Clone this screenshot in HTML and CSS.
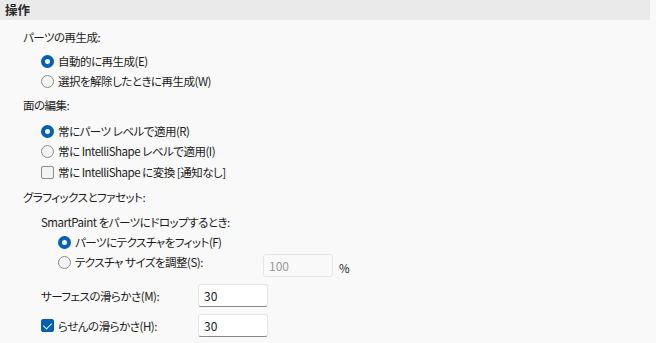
FILE: index.html
```html
<!DOCTYPE html>
<html lang="ja">

<head>
    <meta charset="UTF-8">
    <meta name="viewport" content="width=device-width, initial-scale=1.0">
    <title>操作</title>
    <link rel="stylesheet" href="styles.css">
</head>

<body>
    <div class="panel">
        <div class="panel-header">操作</div>

        <div class="panel-body">
            <div class="group-label g1">パーツの再生成:</div>
            <div class="options">
                <label class="option"><span class="radio checked"></span>自動的に再生成(E)</label>
                <label class="option"><span class="radio"></span>選択を解除したときに再生成(W)</label>
            </div>

            <div class="group-label g2">面の編集:</div>
            <div class="options o2">
                <label class="option"><span class="radio checked"></span>常にパーツ レベルで適用(R)</label>
                <label class="option"><span class="radio"></span>常に IntelliShape レベルで適用(I)</label>
                <label class="option cb-row"><span class="checkbox"></span>常に IntelliShape に変換 [通知なし]</label>
            </div>

            <div class="group-label g3">グラフィックスとファセット:</div>
            <div class="sub">
                <div class="sub-label">SmartPaint をパーツにドロップするとき:</div>
                <div class="sub-options">
                    <label class="option"><span class="radio checked"></span>パーツにテクスチャをフィット(F)</label>
                    <div class="option size-row">
                        <label class="size-label"><span class="radio"></span>テクスチャ サイズを調整(S):</label>
                        <input class="field disabled" type="text" value="100" disabled>
                        <span class="unit">%</span>
                    </div>
                </div>

                <div class="field-row r1">
                    <label class="field-label">サーフェスの滑らかさ(M):</label>
                    <input class="field" type="text" value="30">
                </div>
                <div class="field-row r2">
                    <label class="field-label"><span class="checkbox checked"></span>らせんの滑らかさ(H):</label>
                    <input class="field" type="text" value="30">
                </div>
            </div>
        </div>
    </div>
</body>

</html>
```

FILE: styles.css
```css
* {
    margin: 0;
    padding: 0;
    box-sizing: border-box;
}

body {
    background-color: #f9f9f9;
    color: #1b1b1b;
    font-family: 'Noto Sans CJK JP', 'Noto Sans', sans-serif;
    font-size: 11.5px;
    letter-spacing: -0.5px;
    font-feature-settings: "palt";
    width: 656px;
    height: 343px;
    overflow: hidden;
}

.panel-header {
    width: 650px;
    height: 20px;
    line-height: 20px;
    padding-left: 5px;
    background-color: #eaeaea;
    font-weight: bold;
    font-size: 12.5px;
    letter-spacing: 0;
    color: #2b2b2b;
}

.panel-body {
    padding-left: 23px;
}

.group-label,
.sub-label,
.option {
    height: 20px;
    line-height: 20px;
    white-space: nowrap;
}

.g1 {
    margin-top: 7px;
}

.g2 {
    margin-top: 4px;
}

.g3 {
    margin-top: 5px;
}

.options {
    margin-top: 4px;
    padding-left: 18px;
    display: flex;
    flex-direction: column;
}

.o2 {
    margin-top: 6px;
}

.cb-row {
    margin-top: 1px;
}

.option,
.size-label,
.field-label {
    display: flex;
    align-items: center;
}

.radio {
    width: 13px;
    height: 13px;
    border-radius: 50%;
    border: 1px solid #8b8b8b;
    background-color: #f3f3f3;
    margin-right: 4px;
    flex-shrink: 0;
}

.radio.checked {
    border: 4px solid #005fb8;
    background-color: #ffffff;
}

.checkbox {
    width: 13px;
    height: 13px;
    border-radius: 2px;
    border: 1px solid #8b8b8b;
    background-color: #f3f3f3;
    margin-right: 4px;
    flex-shrink: 0;
    position: relative;
}

.checkbox.checked {
    border-color: #005fb8;
    background-color: #005fb8;
}

.checkbox.checked::after {
    content: '';
    position: absolute;
    left: 3px;
    top: 1px;
    width: 4px;
    height: 7px;
    border: solid #ffffff;
    border-width: 0 1.3px 1.3px 0;
    transform: rotate(45deg);
}

.sub {
    margin-top: 5px;
    padding-left: 18px;
}

.sub-options {
    padding-left: 17px;
}

.size-row {
    align-items: flex-start;
}

.size-label {
    width: 205px;
    height: 20px;
}

.field {
    width: 70px;
    height: 23px;
    border: 1px solid #e5e5e5;
    border-bottom-color: #8a8a8a;
    border-radius: 3px;
    background-color: #ffffff;
    font-family: 'Noto Sans CJK JP', 'Noto Sans', sans-serif;
    font-size: 12px;
    color: #1b1b1b;
    padding-left: 5px;
    outline: none;
}

.field.disabled {
    margin-top: 2px;
    background-color: #f9f9f9;
    border-color: #e5e5e5;
    color: #9a9a9a;
}

.unit {
    margin-left: 6px;
    margin-top: 6px;
}

.field-row {
    display: flex;
    align-items: center;
}

.r1 {
    margin-top: 12px;
}

.r2 {
    margin-top: 7px;
}

.field-label {
    width: 157px;
}
```
